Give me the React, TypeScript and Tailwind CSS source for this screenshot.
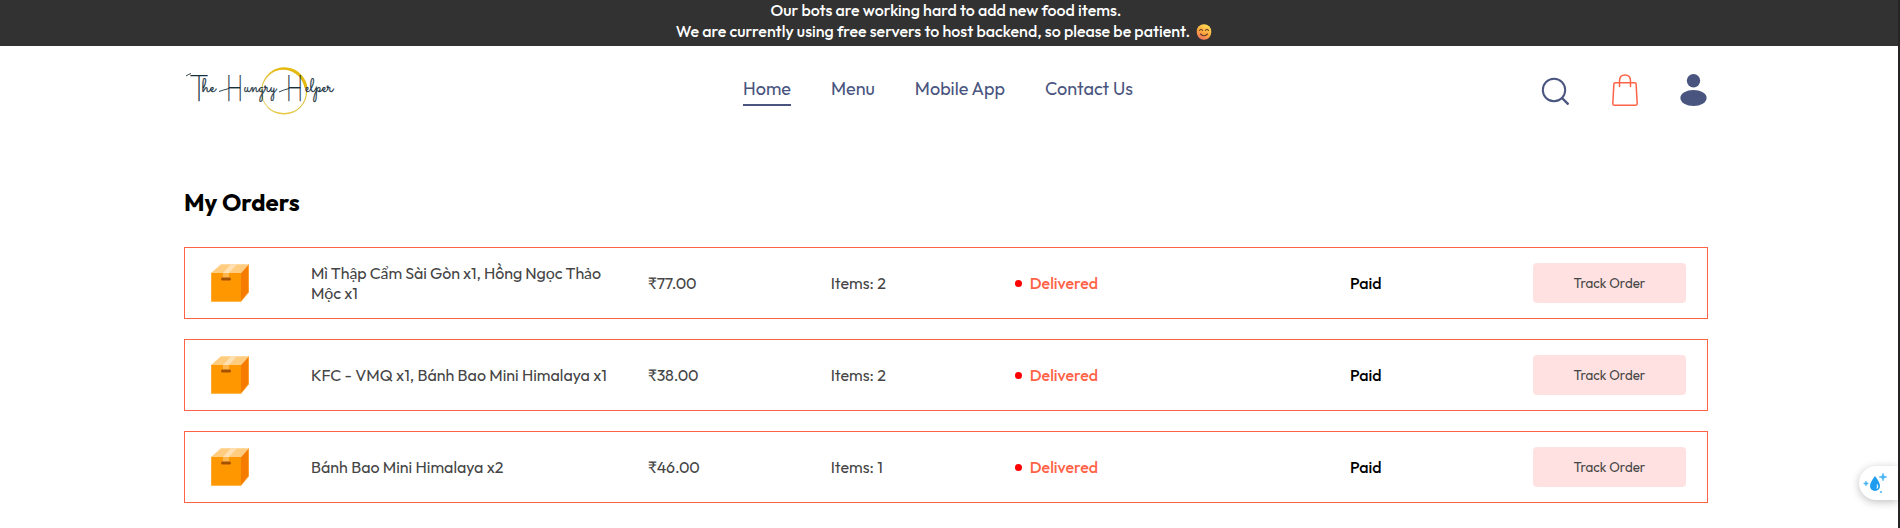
const orders = [
  { name: 'Mì Thập Cẩm Sài Gòn x1, Hồng Ngọc Thảo Mộc x1', price: '₹77.00', items: 2, tracking: 'tracking-[-0.090px]' },
  { name: 'KFC - VMQ x1, Bánh Bao Mini Himalaya x1', price: '₹38.00', items: 2, tracking: '' },
  { name: 'Bánh Bao Mini Himalaya x2', price: '₹46.00', items: 1, tracking: '' },
];

const script = "Sacramento, Allura, 'Dancing Script', Caveat, 'Liberation Serif', cursive";

function Logo() {
  return (
    <svg width="150" height="54" viewBox="0 0 150 54" className="block overflow-visible" fill="none">
      <defs>
        <linearGradient id="ring" x1="0" y1="1" x2="0.8" y2="0">
          <stop offset="0" stopColor="#efdc8c" />
          <stop offset="0.5" stopColor="#dfc040" />
          <stop offset="1" stopColor="#e4b90c" />
        </linearGradient>
      </defs>
      <circle cx="100" cy="27.500" r="22.500" stroke="url(#ring)" strokeWidth="1.100" />
      <path d="M78.500 19A23.200 23.200 0 0 1 123.500 24L120.500 24A22 22 0 0 0 78.500 19Z" fill="#e4ba12" />
      <path d="M82 43Q99 57 117 43.500Q100 54.500 82 43Z" fill="#e6c83f" />
      <text fill="#17303d" stroke="#17303d" strokeWidth="0.250" fontFamily="Outfit, Lato, sans-serif" fontWeight="100" fontSize="39">
        <tspan x="5" y="36.500" textLength="20" lengthAdjust="spacingAndGlyphs">T</tspan>
        <tspan x="18" y="28" fontFamily={script} fontWeight="400" fontSize="19" textLength="13.500" lengthAdjust="spacingAndGlyphs">he</tspan>
        <tspan> </tspan>
        <tspan x="42" y="37" textLength="17" lengthAdjust="spacingAndGlyphs">H</tspan>
        <tspan x="60" y="28" fontFamily={script} fontWeight="400" fontSize="19" textLength="32" lengthAdjust="spacingAndGlyphs">ungry</tspan>
        <tspan> </tspan>
        <tspan x="102" y="37" textLength="17" lengthAdjust="spacingAndGlyphs">H</tspan>
        <tspan x="121" y="28" fontFamily={script} fontWeight="400" fontSize="19" textLength="28" lengthAdjust="spacingAndGlyphs">elper</tspan>
      </text>
      <path d="M2 12Q4 10.500 7 9.500M35 27.500Q39 26 45 24.500M95 28Q99 26 105 24.500" stroke="#17303d" strokeWidth="0.900" />
    </svg>
  );
}

function SmileEmoji() {
  return (
    <svg width="16" height="16" viewBox="0 0 16 16" fill="none" className="block">
      <defs>
        <linearGradient id="face" x1="0.700" y1="0" x2="0.200" y2="1">
          <stop stopColor="#ffdd55" />
          <stop offset="0.550" stopColor="#fba63c" />
          <stop offset="1" stopColor="#ee6d65" />
        </linearGradient>
      </defs>
      <rect x="0.800" y="0.200" width="14.400" height="15.600" rx="7" fill="url(#face)" />
      <path d="M3.500 6.500Q5 4 6.500 6.500M9.500 6.500Q11 4 12.500 6.500M4.500 10Q8 13.500 11.500 10" stroke="#6b3b2c" strokeWidth="1.100" strokeLinecap="round" />
    </svg>
  );
}

function ParcelIcon() {
  return (
    <svg width="38" height="38" viewBox="0 0 38 38" className="ml-[6px] block">
      <path d="M0 9L10 0.300H38L30 9Z" fill="#ffcc80" />
      <path d="M30 9L38 0.300V28L30 37.700Z" fill="#f57c00" />
      <path d="M0 9H30V37.700H0Z" fill="#ff9800" />
      <path d="M0.400 9V37.400H30L37.700 28V0.500" fill="none" stroke="#ffb74d" strokeWidth="0.700" />
      <path d="M12 9L20 0.300H26L18 9V14H12Z" fill="#ffe0b2" />
      <path d="M12 9H18V14H12Z" fill="#ffb74d" />
      <rect x="10" y="13.500" width="10" height="3" rx="1.500" fill="#a65100" />
    </svg>
  );
}

export default function App() {
  return (
    <div className="relative flex h-[528px] w-full overflow-hidden bg-white font-[Outfit,Lato,'Noto_Sans',sans-serif]">
      <div className="flex min-w-0 flex-1 flex-col">
        <div className="flex h-[46px] flex-col items-center bg-[#323232] pr-[8px] text-base leading-[21px] font-medium text-white">
          <p className="pl-[2px]">Our bots are working hard to add new food items.</p>
          <div className="flex items-center gap-[6px] pr-[2px]">
            <p>We are currently using free servers to host backend, so please be patient.</p>
            <SmileEmoji />
          </div>
        </div>

        <header className="ml-[184px] flex h-[90px] w-[1524px] items-start justify-between">
          <div className="w-[559px] pt-[18px]"><Logo /></div>
          <nav className="flex flex-1 gap-[40px] pt-[30px] text-lg leading-[26px] text-[#49557e]">
            <a className="h-[30px] border-b-2 border-[#49557e]">Home</a>
            <a>Menu</a>
            <a>Mobile App</a>
            <a>Contact Us</a>
          </nav>
          <div className="flex pr-px text-[#49557e]">
            <svg width="28" height="28" viewBox="0 0 28 28" className="mt-[31px] mr-[43px]" fill="none" stroke="#49557e" strokeWidth="2">
              <circle cx="13" cy="13" r="11.200" />
              <path d="M20.500 20.500L27.500 27.500" strokeWidth="2.400" />
            </svg>
            <svg width="26" height="33" viewBox="0 0 26 33" className="mt-[28px] mr-[42px]" fill="none" stroke="#ff6347" strokeWidth="1.500" strokeLinecap="round" strokeLinejoin="round">
              <path d="M3.200 8.800H22.800Q24 8.800 24.100 9.800L25.200 29.800Q25.200 31.200 24 31.200H2Q0.800 31.200 0.800 29.800L1.900 9.800Q2 8.800 3.200 8.800Z" />
              <path d="M7.500 12.500V7Q7.500 1 13 1Q18.500 1 18.500 7V12.500" />
            </svg>
            <svg width="27" height="33" viewBox="0 0 27 33" className="mt-[28px]" fill="#49557e">
              <circle cx="13.500" cy="6.700" r="6.700" />
              <ellipse cx="13.500" cy="24" rx="13.100" ry="8" />
            </svg>
          </div>
        </header>

        <main className="ml-[184px] w-[1524px] pt-[49px]">
          <h2 className="h-[62px] text-2xl leading-[34px] font-bold text-black">My Orders</h2>
          <div className="flex flex-col gap-5">
            {orders.map((o) => (
              <div key={o.price} className="grid h-[72px] grid-cols-[0.5fr_2fr_1fr_1fr_2fr_1fr_1fr] items-center gap-[30px] border border-[#ff6347] pr-[21px] pl-[20px] text-base text-[#454545]">
                <ParcelIcon />
                <p className={`-ml-[0.500px] leading-5 ${o.tracking}`}>{o.name}</p>
                <p className="tracking-[-0.200px]">{o.price}</p>
                <p>Items: {o.items}</p>
                <p className="flex items-center gap-2 font-medium text-[#ff6347]">
                  <span className="mt-px ml-px h-[7px] w-[7px] rounded-full bg-[#ff0000]" />
                  Delivered
                </p>
                <p className="font-medium text-black">Paid</p>
                <button className="h-10 rounded bg-[#ffe1e1] pt-[2px] text-[13.333px] text-[#454545]">Track Order</button>
              </div>
            ))}
          </div>
        </main>
      </div>
      <div className="w-[2px] bg-[#252525]" />

      <div className="absolute top-[466px] right-[2px] flex h-[34px] w-[39px] items-center rounded-l-full bg-white pl-[4px] shadow-[0_2px_8px_rgba(0,0,0,0.250)]">
        <svg width="24" height="22" viewBox="0 0 24 22">
          <path d="M12 4Q7 10.500 7 14A5 5 0 0 0 17 14Q17 10.500 12 4Z" fill="#1e9cf0" />
          <path d="M14.200 12.500Q15.800 14.500 14 16.500Q14.500 14.500 14.200 12.500Z" fill="#fff" stroke="#fff" strokeWidth="0.700" />
          <path d="M20 1L21 4L24 5L21 6L20 9L19 6L16 5L19 4ZM3 9L3.800 10.700L5.500 11.500L3.800 12.300L3 14L2.200 12.300L0.500 11.500L2.200 10.700ZM18 19L19 20L18 21L17 20Z" fill="#45b4f5" stroke="#45b4f5" strokeWidth="0.500" />
        </svg>
      </div>
    </div>
  );
}
